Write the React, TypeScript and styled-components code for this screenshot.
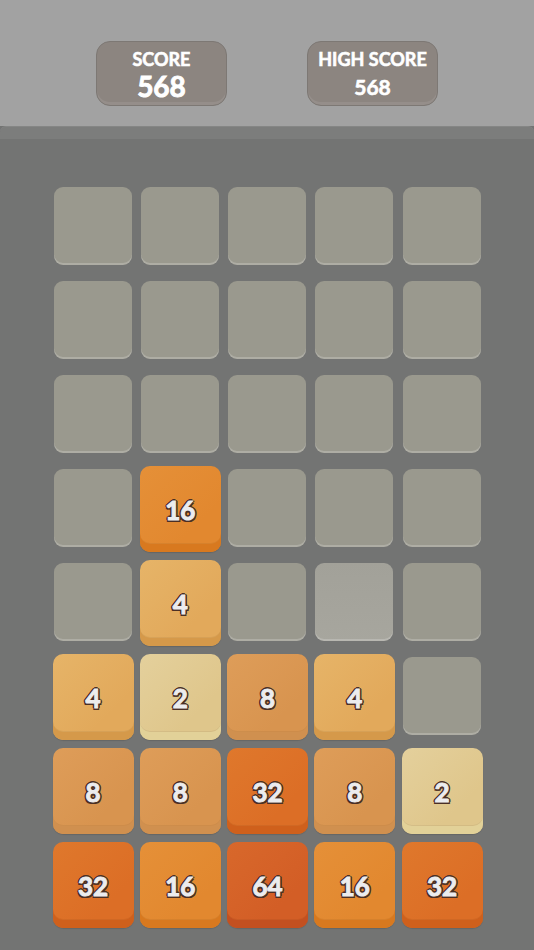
import React from 'react';
import styled, { createGlobalStyle, css } from 'styled-components';

type TileValue = 0 | 2 | 4 | 8 | 16 | 32 | 64 | 'ghost';

const board: TileValue[][] = [
  [0, 0, 0, 0, 0],
  [0, 0, 0, 0, 0],
  [0, 0, 0, 0, 0],
  [0, 16, 0, 0, 0],
  [0, 4, 0, 'ghost', 0],
  [4, 2, 8, 4, 0],
  [8, 8, 32, 8, 2],
  [32, 16, 64, 16, 32],
];

const palette: Record<number, { face: string; light: string; base: string }> = {
  2: { face: '#dfc68b', light: '#e4d09c', base: '#e2d198' },
  4: { face: '#e2a95b', light: '#e6b468', base: '#d5994a' },
  8: { face: '#d8944f', light: '#de9d59', base: '#d0904f' },
  16: { face: '#e2882f', light: '#e59038', base: '#d8791f' },
  32: { face: '#dc6e26', light: '#df782c', base: '#cf601c' },
  64: { face: '#d35e26', light: '#d8682b', base: '#c35020' },
};

export default function App() {
  return (
    <Page>
      <GlobalStyle />
      <Header>
        <ScoreBox>
          <ScoreLabel>SCORE</ScoreLabel>
          <ScoreValue $big>568</ScoreValue>
        </ScoreBox>
        <ScoreBox>
          <ScoreLabel>HIGH SCORE</ScoreLabel>
          <ScoreValue>568</ScoreValue>
        </ScoreBox>
      </Header>
      <Ledge />
      <Board>
        <Grid>
          {board.map((row, r) =>
            row.map((v, c) => (
              <Cell key={`${r}-${c}`} $ghost={v === 'ghost'}>
                {typeof v === 'number' && v > 0 && (
                  <Tile $face={palette[v].face} $light={palette[v].light} $base={palette[v].base}>
                    {v}
                  </Tile>
                )}
              </Cell>
            ))
          )}
        </Grid>
      </Board>
    </Page>
  );
}

const GlobalStyle = createGlobalStyle`
  html, body {
    margin: 0;
    padding: 0;
    background: #737473;
    font-family: Lato, "Open Sans", "DejaVu Sans", sans-serif;
  }
`;

const Page = styled.div`
  width: 534px;
  min-height: 950px;
  display: flex;
  flex-direction: column;
  background: #737473;
`;

const Header = styled.div`
  height: 126px;
  box-sizing: border-box;
  padding-top: 41px;
  background: #a2a2a2;
  display: flex;
  justify-content: center;
  gap: 80px;
`;

const ScoreBox = styled.div`
  width: 131px;
  height: 65px;
  box-sizing: border-box;
  border-radius: 14px;
  background: #8c8580;
  border: 1.5px solid #7d7874;
  box-shadow: inset 0 -3px 0 rgba(255, 255, 255, 0.08);
  display: flex;
  flex-direction: column;
  align-items: center;
  padding-top: 7px;
  color: #ffffff;
  font-family: Lato, "Open Sans", sans-serif;
  -webkit-text-stroke: 0.6px #ffffff;
`;

const ScoreLabel = styled.div`
  font-size: 18px;
  font-weight: 700;
  line-height: 21px;
`;

const ScoreValue = styled.div<{ $big?: boolean }>`
  font-weight: 700;
  font-size: ${(p) => (p.$big ? '28px' : '21px')};
  line-height: 30px;
  margin-top: ${(p) => (p.$big ? '1px' : '2px')};
  -webkit-text-stroke: ${(p) => (p.$big ? '0.9px' : '0.6px')} #ffffff;
`;

const Ledge = styled.div`
  height: 12px;
  background: #7c7d7c;
  border-radius: 6px 6px 0 0;
  border-top: 1px solid #858685;
`;

const Board = styled.div`
  flex: 1;
  background: #737473;
  display: flex;
  justify-content: center;
  padding-top: 48px;
`;

const Grid = styled.div`
  display: grid;
  grid-template-columns: repeat(5, 78px);
  grid-auto-rows: 78px;
  column-gap: 9.25px;
  row-gap: 16px;
`;

const Cell = styled.div<{ $ghost?: boolean }>`
  position: relative;
  border-radius: 9px;
  background: #9a998e;
  box-shadow: inset 0 -2px 0 rgba(255, 255, 255, 0.2);
  ${(p) =>
    p.$ghost &&
    css`
      background: linear-gradient(180deg, #a2a199 0%, #a7a69e 100%);
    `}
`;

const Tile = styled.div<{ $face: string; $light: string; $base: string }>`
  position: absolute;
  top: -3px;
  left: -1px;
  right: -2px;
  height: 86px;
  border-radius: 10px;
  background: linear-gradient(135deg, ${(p) => p.$light} 0%, ${(p) => p.$face} 70%);
  box-shadow: inset 0 -8px 0 ${(p) => p.$base}, inset 0 -9px 0 rgba(0, 0, 0, 0.05),
    0 1px 1px rgba(0, 0, 0, 0.12);
  display: flex;
  align-items: center;
  justify-content: center;
  padding-top: 2px;
  box-sizing: border-box;
  font-family: Lato, "DejaVu Sans", sans-serif;
  font-weight: 700;
  font-size: 26px;
  color: #ececee;
  -webkit-text-stroke: 1px #ececee;
  text-shadow: -2px 0 0 #4a2f25, 2px 0 0 #4a2f25, 0 -2px 0 #4a2f25, 0 2px 0 #4a2f25,
    -1.5px -1.5px 0 #4a2f25, 1.5px -1.5px 0 #4a2f25, -1.5px 1.5px 0 #4a2f25, 1.5px 1.5px 0 #4a2f25;
`;
